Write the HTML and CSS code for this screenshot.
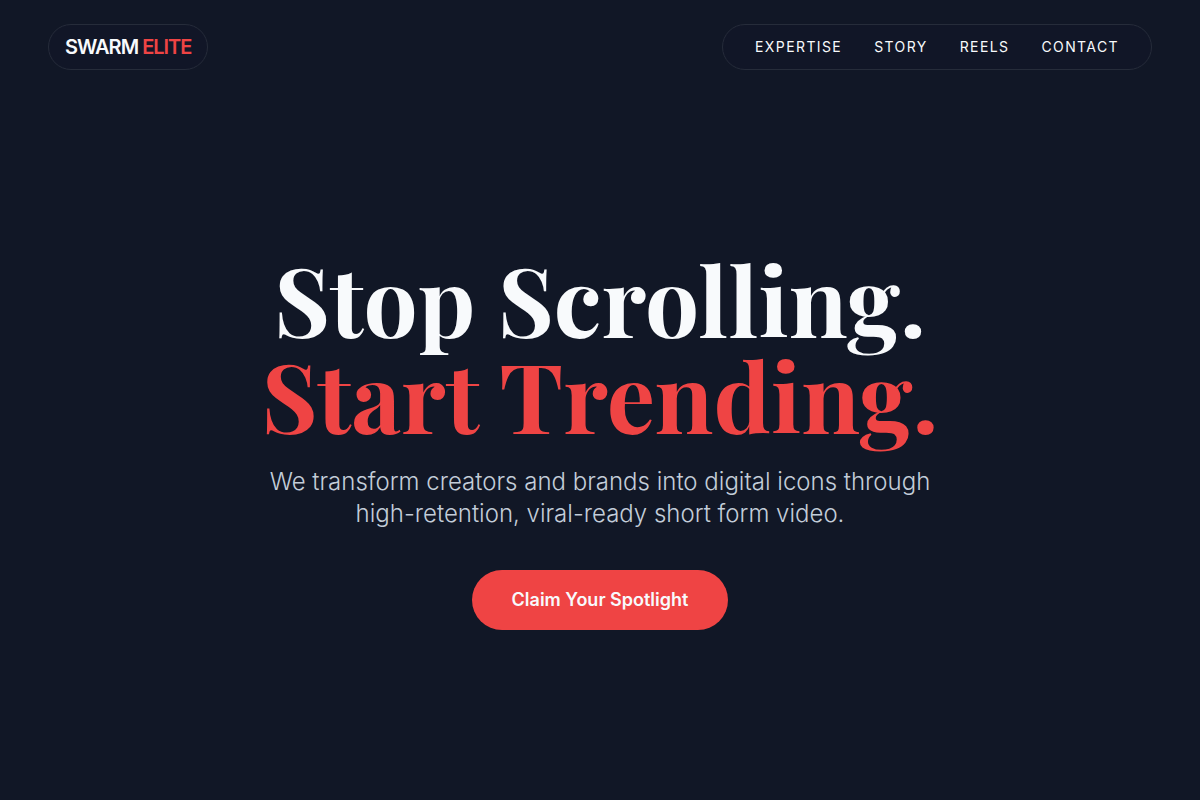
FILE: index.html
```html
<!DOCTYPE html>
<html lang="en">
<head>
    <meta charset="UTF-8">
    <meta name="viewport" content="width=device-width, initial-scale=1.0">
    <title>Swarm Elite</title>
    <link rel="stylesheet" href="styles.css">
</head>
<body>
    <header class="header">
        <a href="#home" class="logo">SWARM <span class="accent">ELITE</span></a>
        <nav class="nav">
            <a href="#expertise">EXPERTISE</a>
            <a href="#story">STORY</a>
            <a href="#reels">REELS</a>
            <a href="#contact">CONTACT</a>
        </nav>
    </header>

    <main class="hero" id="home">
        <h1 class="hero-title">Stop Scrolling.<br><span class="accent">Start Trending.</span></h1>
        <p class="hero-text">We transform creators and brands into digital icons through high-retention, viral-ready short form video.</p>
        <button type="button" class="cta">Claim Your Spotlight</button>
    </main>
</body>
</html>
```

FILE: styles.css
```css
* {
    box-sizing: border-box;
    margin: 0;
    padding: 0;
}

body {
    font-family: Inter, "Liberation Sans", sans-serif;
    background-color: #111726;
    color: #f8fafc;
}

a {
    color: inherit;
    text-decoration: none;
}

.accent {
    color: #ef4444;
}

/* Floating header */
.header {
    position: fixed;
    top: 0;
    left: 0;
    width: 100%;
    padding: 24px 48px;
    display: flex;
    justify-content: space-between;
    align-items: center;
}

.logo,
.nav {
    background-color: #111627;
    border: 1px solid #262c3a;
    border-radius: 24px;
}

.logo {
    padding: 8px 16px;
    font-size: 20px;
    line-height: 28px;
    font-weight: 600;
    letter-spacing: -0.05em;
}

.nav {
    display: flex;
    gap: 32px;
    padding: 12px 32px;
    font-size: 14px;
    line-height: 20px;
    letter-spacing: 0.1em;
}

/* Hero */
.hero {
    min-height: 100vh;
    padding: 80px 24px 0;
    display: flex;
    flex-direction: column;
    justify-content: center;
    align-items: center;
    text-align: center;
}

.hero-title {
    font-family: "Playfair Display", "Liberation Serif", serif;
    font-size: 96px;
    line-height: 1;
    font-weight: 700;
    margin-bottom: 24px;
}

.hero-text {
    max-width: 672px;
    font-size: 24px;
    line-height: 32px;
    font-weight: 300;
    color: #c3cdd9;
    margin-bottom: 40px;
}

.cta {
    padding: 16px 40px;
    border: none;
    border-radius: 30px;
    background-color: #ef4444;
    color: #f8fafc;
    font-family: inherit;
    font-size: 18px;
    line-height: 28px;
    font-weight: 600;
    cursor: pointer;
}
```
